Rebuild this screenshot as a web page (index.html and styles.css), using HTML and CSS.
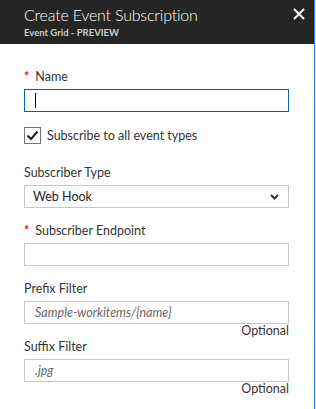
FILE: index.html
```html
<!DOCTYPE html>
<html lang="en">

<head>
  <meta charset="UTF-8" />
  <meta name="viewport" content="width=device-width, initial-scale=1.0" />
  <title>Create Event Subscription</title>
  <link rel="stylesheet" href="styles.css">
</head>

<body>
  <div class="blade">
    <div class="blade-header">
      <div class="blade-titles">
        <h1>Create Event Subscription</h1>
        <p>Event Grid - PREVIEW</p>
      </div>
      <button class="close" aria-label="Close">
        <svg width="12" height="12" viewBox="0 0 12 12">
          <path d="M1 1 L11 11 M11 1 L1 11" stroke="#fff" stroke-width="2" fill="none" />
        </svg>
      </button>
    </div>

    <form class="blade-form">
      <div class="field">
        <label class="required">Name</label>
        <div class="input focused"><span class="caret"></span></div>
      </div>

      <div class="check">
        <span class="check-box">
          <svg width="13" height="11" viewBox="0 0 13 11">
            <path d="M1.5 5.5 L5 9 L11.5 1.5" stroke="#222" stroke-width="2" fill="none" />
          </svg>
        </span>
        <span>Subscribe to all event types</span>
      </div>

      <div class="field">
        <label>Subscriber Type</label>
        <div class="input select">
          <span>Web Hook</span>
          <svg width="9" height="6" viewBox="0 0 9 6">
            <path d="M1 1 L4.5 4.5 L8 1" stroke="#333" stroke-width="2" fill="none" />
          </svg>
        </div>
      </div>

      <div class="field">
        <label class="required">Subscriber Endpoint</label>
        <div class="input"></div>
      </div>

      <div class="field filter">
        <label>Prefix Filter</label>
        <div class="input placeholder">Sample-workitems/{name}</div>
        <div class="hint">Optional</div>
      </div>

      <div class="field filter">
        <label>Suffix Filter</label>
        <div class="input placeholder">.jpg</div>
        <div class="hint">Optional</div>
      </div>
    </form>
  </div>
</body>

</html>
```

FILE: styles.css
```css
* {
  box-sizing: border-box;
}

html,
body {
  margin: 0;
  height: 100%;
  background: #fff;
}

body {
  font-family: Lato, "Open Sans", sans-serif;
  font-size: 12.5px;
  color: #333;
}

.blade {
  width: 315px;
  height: 409px;
  border-right: 1px solid #2b88d8;
  background: #fff;
}

.blade-header {
  height: 44px;
  background: #252525;
  display: flex;
  justify-content: space-between;
  padding: 5px 9px 0 24px;
}

.blade-header h1 {
  margin: 0;
  font-size: 16px;
  font-weight: 300;
  line-height: 20px;
  letter-spacing: -0.2px;
  color: #fff;
}

.blade-header p {
  margin: 1px 0 0;
  font-size: 9.5px;
  font-weight: 700;
  line-height: 13px;
  color: #ccc;
}

.close {
  appearance: none;
  border: none;
  background: none;
  padding: 0;
  margin-top: 3px;
  width: 12px;
  height: 12px;
  cursor: pointer;
}

.close svg {
  display: block;
}

.blade-form {
  padding: 24px 25px 0 24px;
}

.field {
  margin-bottom: 14px;
}

.field label {
  display: block;
  line-height: 18px;
  margin-bottom: 3px;
}

.required::before {
  content: "*";
  color: #e81123;
  font-weight: 700;
  margin-right: 6px;
}

.input {
  height: 23px;
  border: 1px solid #c8c8c8;
  padding: 0 10px;
  display: flex;
  align-items: center;
  line-height: 21px;
}

.input.focused {
  border: 1.5px solid #0f5fa8;
}

.caret {
  width: 1px;
  height: 15px;
  background: #000;
}

.select {
  justify-content: space-between;
  padding: 0 9px 0 8px;
  color: #222;
}

.placeholder {
  font-style: italic;
  color: #666;
}

.check {
  display: flex;
  align-items: center;
  gap: 6px;
  margin: 15px 0 20px;
}

.check-box {
  width: 17px;
  height: 17px;
  border: 1px solid #777;
  display: flex;
  align-items: center;
  justify-content: center;
}

.filter {
  margin-bottom: 0;
}

.hint {
  text-align: right;
  line-height: 14px;
  color: #333;
}
```
